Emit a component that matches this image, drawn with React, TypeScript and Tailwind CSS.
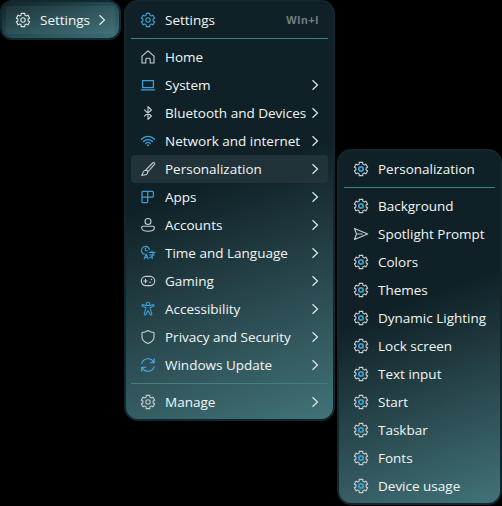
import type { ReactNode } from "react";

const BLUE = "#3f9fd8";
const GREY = "#c9cfd0";

function Svg({ color, children }: { color: string; children: ReactNode }) {
  return (
    <svg viewBox="0 0 16 16" className="h-4 w-4 shrink-0" fill="none" stroke={color} strokeWidth="1.1" strokeLinecap="round" strokeLinejoin="round">
      {children}
    </svg>
  );
}

const gearPath =
  [0, 60, 120, 180, 240, 300]
    .flatMap((a) => [[a - 15, 6.9], [a + 15, 6.9], [a + 20, 5.2], [a + 40, 5.2]])
    .map(([a, r], i) => {
      const t = ((a - 90) * Math.PI) / 180;
      return `${i ? "L" : "M"}${(8 + r * Math.cos(t)).toFixed(2)} ${(8 + r * Math.sin(t)).toFixed(2)}`;
    })
    .join("") + "Z";

function Gear({ color, center = color }: { color: string; center?: string }) {
  return (
    <Svg color={color}>
      <path d={gearPath} />
      <circle cx="8" cy="8" r="2.2" stroke={center} strokeWidth={center === color ? 1.1 : 1.7} />
    </Svg>
  );
}

const icons: Record<string, ReactNode> = {
  Home: <Svg color={GREY}><path d="M2 7.2 8 1.8l6 5.4V14h-3.8v-3.8q0-1-1-1H6.8q-1 0-1 1V14H2Z" /></Svg>,
  System: <Svg color={BLUE}><path d="M2.6 3.6h10.8v7H2.6ZM1.4 12.9h13.2" strokeWidth="1.3" /></Svg>,
  Bluetooth: <Svg color={GREY}><path d="m4.4 4.8 7 6.2L8 14.4V1.6L11.4 5l-7 6.2" /></Svg>,
  Network: (
    <Svg color={BLUE}>
      <path d="M1.4 6.3c3.7-3.8 9.5-3.8 13.2 0M3.5 8.5c2.6-2.6 6.4-2.6 9 0M5.6 10.6c1.4-1.4 3.4-1.4 4.8 0" strokeWidth="1.25" />
      <circle cx="8" cy="12.2" r="1" fill={BLUE} stroke="none" />
    </Svg>
  ),
  Brush: <Svg color={GREY}><path d="M5.7 9.2 12.6 2q1.1-.9 1.8-.2t-.2 1.8L7.8 11M5.7 9.2c1.3 0 2.1.7 2.1 1.8 0 2.2-2 3.4-6.2 3.2 1.5-1.3 1-2.4 1.9-3.7q.8-1.2 2.2-1.3Z" /></Svg>,
  Apps: <Svg color={BLUE}><path d="M7.7 2.3H3q-1 0-1 1v9.4q0 1 1 1h3.7q1 0 1-1V2.3h4.7q1 0 1 1v3.8q0 1-1 1H2" strokeWidth="1.25" /></Svg>,
  Accounts: <Svg color={GREY}><circle cx="8" cy="4.5" r="3" /><path d="M2.8 9.3h10.4q1.2 0 1.2 1.2c0 2.3-2.5 3.8-6.4 3.8s-6.4-1.5-6.4-3.8q0-1.2 1.2-1.2Z" /></Svg>,
  Time: <Svg color={BLUE}><path d="M4.5 9.3A4 4 0 1 1 9.4 4.5M5.4 3.1v2.6h2M4.2 14l2-5 2 5M5 12.4h2.5M9 7.4h6M12 6v1.4M9.8 10h4.6M13.3 8c-.3 2.4-1.5 4-3.5 4.7M12.2 9.8v4" /></Svg>,
  Gaming: <Svg color={GREY}><rect x="1.3" y="3.4" width="13.4" height="9.2" rx="4.6" /><path d="M3.8 8h3.4M5.5 6.3v3.4" /><circle cx="11.5" cy="6.6" r=".75" fill={GREY} stroke="none" /><circle cx="10" cy="9.2" r=".75" fill={GREY} stroke="none" /></Svg>,
  Access: <Svg color={BLUE}><circle cx="8" cy="2.9" r="1.7" /><path d="M6.5 4.7 3 3.5q-1.2 0-1 1.2l4 2-1.8 6.2q.2 1.2 1.4 1L8 9.6l2.4 4.3q1.2.2 1.4-1L10 6.7l4-2q.2-1.2-1-1.2L9.5 4.7" /></Svg>,
  Privacy: <Svg color={GREY}><path d="M8 1.5q2.8 1.9 6 2V8c0 3-2.2 5.1-6 6.5C4.200 13.100 2 11 2 8V3.500q3.200-.1 6-2Z" /></Svg>,
  Update: <Svg color="#48b0e7"><path d="M1.8 6.3a6.4 6.4 0 0 1 12-.8M14.200 1.800v3.900h-3.900M14.200 9.700a6.400 6.400 0 0 1-12 .8M1.800 14.200v-3.900h3.900" /></Svg>,
  Send: <Svg color={GREY}><path d="m1.500 2.500 13.200 5.500-13.200 5.500L3.500 8ZM3.500 8h5.800" /></Svg>,
};

function Chevron() {
  return (
    <svg viewBox="0 0 8 12" className="h-3 w-2 shrink-0" fill="none" stroke="#e2e8e9" strokeWidth="1.2">
      <path d="M1.500 1.200 6.500 6l-5 4.800" />
    </svg>
  );
}

function Row({ icon, label, arrow = false, active = false, hint }: { icon: ReactNode; label: string; arrow?: boolean; active?: boolean; hint?: string }) {
  return (
    <div className={`flex h-7 items-center rounded pl-[9px] pr-[9px] ${active ? "bg-[#213238]" : ""}`}>
      {icon}
      <span className="ml-[9px] grow whitespace-nowrap">{label}</span>
      {hint && <span className="font-['Liberation_Sans'] text-[11px] font-bold tracking-[0.6px] text-[#737f84]">{hint}</span>}
      {arrow && <Chevron />}
    </div>
  );
}

const mainRows: [string, string][] = [
  ["System", "System"],
  ["Bluetooth", "Bluetooth and Devices"],
  ["Network", "Network and internet"],
  ["Brush", "Personalization"],
  ["Apps", "Apps"],
  ["Accounts", "Accounts"],
  ["Time", "Time and Language"],
  ["Gaming", "Gaming"],
  ["Access", "Accessibility"],
  ["Privacy", "Privacy and Security"],
  ["Update", "Windows Update"],
];

const subRows = ["Background", "Spotlight Prompt", "Colors", "Themes", "Dynamic Lighting", "Lock screen", "Text input", "Start", "Taskbar", "Fonts", "Device usage"];

export default function App() {
  return (
    <div className="flex h-[506px] w-[502px] items-start overflow-hidden bg-black font-['Open_Sans','Noto_Sans',sans-serif] text-[13.5px] leading-5 text-[#f3f6f6]">
      <div className="h-10 w-[121px] shrink-0 rounded-[12px] border-2 border-[#12282d] bg-gradient-to-br from-[#10242a] via-[#244b52] to-[#3d7077] p-1">
        <div className="rounded bg-white/5">
          <Row icon={<Gear color="#dfe4e5" />} label="Settings" arrow />
        </div>
      </div>

      <div className="ml-[3px] h-[421px] w-[211px] shrink-0 rounded-[14px] border-2 border-[#12262b] bg-[linear-gradient(160deg,#0f2126_0%,#0f2126_43%,#28474d_70%,#417378_100%)] px-[5px] pt-1">
        <Row icon={<Gear color={BLUE} />} label="Settings" hint="WIn+I" />
        <div className="mt-1 mb-1 h-px bg-[#3f7f82]" />
        <Row icon={icons.Home} label="Home" />
        {mainRows.map(([icon, label]) => (
          <Row key={label} icon={icons[icon]} label={label} arrow active={label === "Personalization"} />
        ))}
        <div className="mt-1 mb-1 h-px bg-[#447e83]" />
        <Row icon={<Gear color={GREY} />} label="Manage" arrow />
      </div>

      <div className="ml-[2px] mt-[149px] h-[356px] w-[165px] shrink-0 rounded-[14px] border-2 border-[#12262b] bg-[linear-gradient(160deg,#0f2126_0%,#0f2126_43%,#28474d_70%,#417378_100%)] px-[5px] pt-1">
        <Row icon={<Gear color={GREY} center={BLUE} />} label="Personalization" />
        <div className="mt-1 mb-1 h-px bg-[#3f7f82]" />
        {subRows.map((label) => (
          <Row key={label} icon={label === "Spotlight Prompt" ? icons.Send : <Gear color={GREY} center={BLUE} />} label={label} />
        ))}
      </div>
    </div>
  );
}
